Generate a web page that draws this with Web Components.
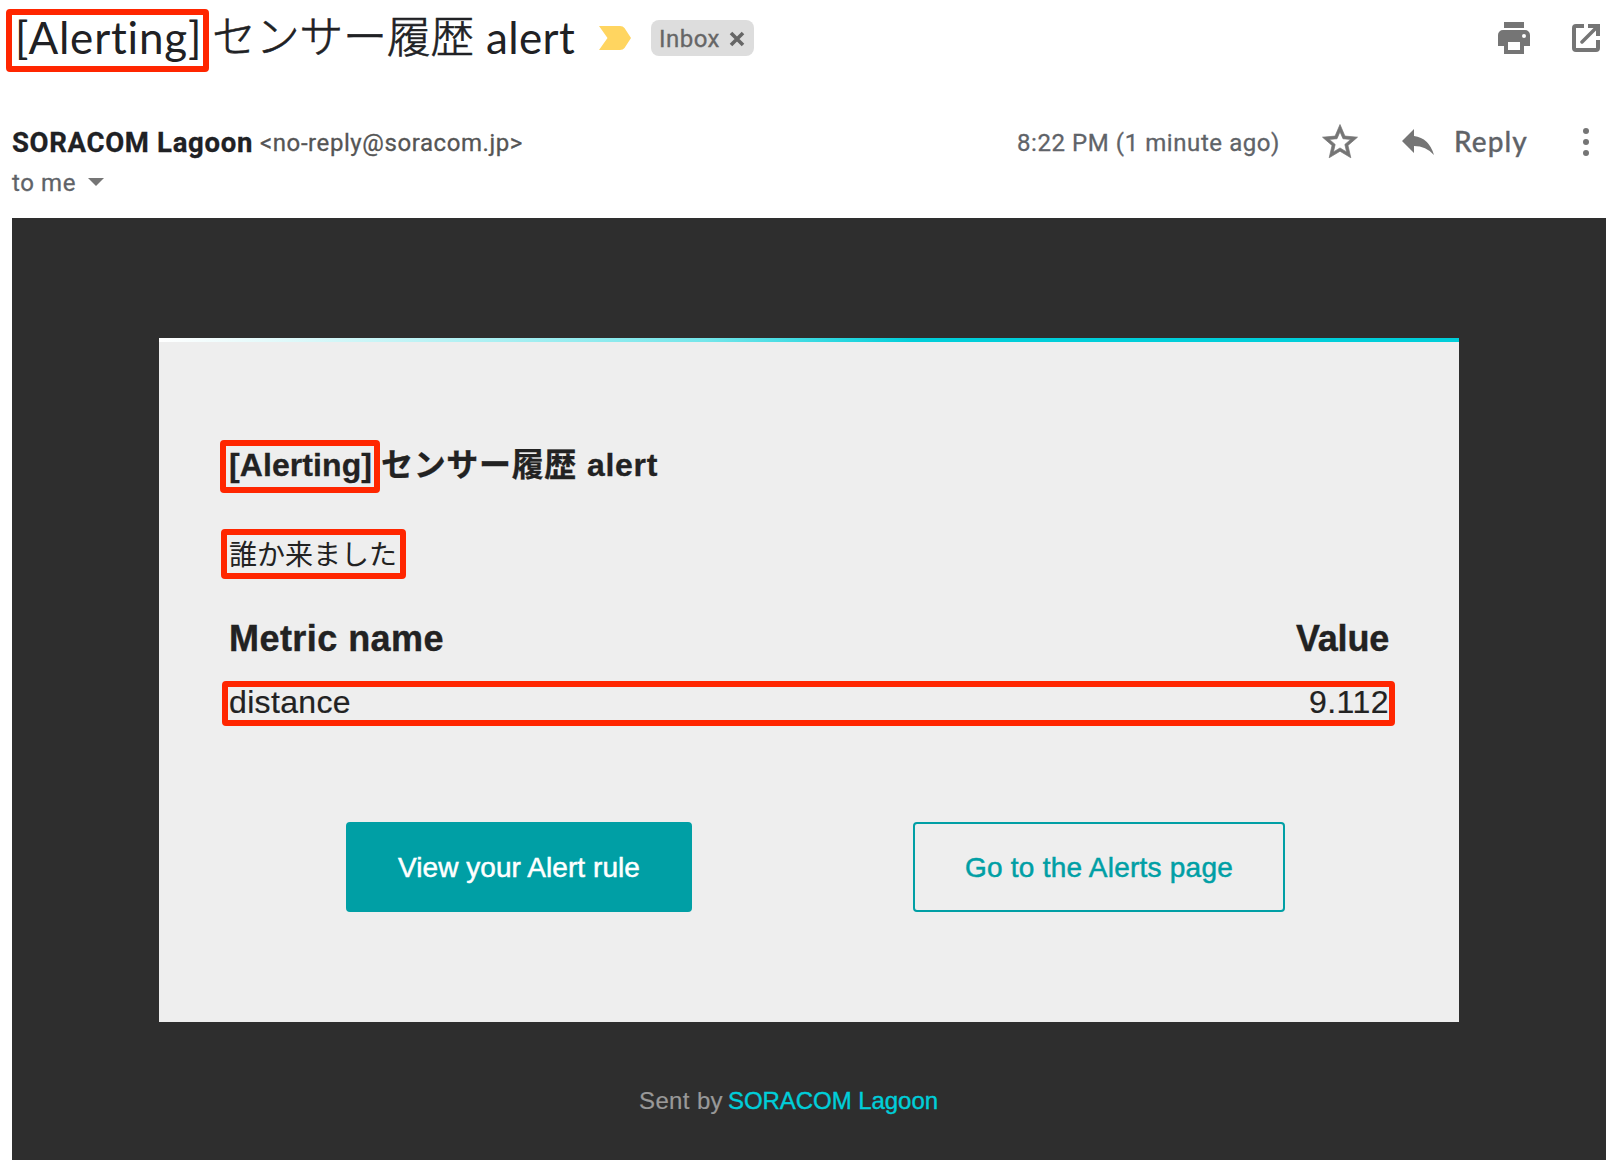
<!DOCTYPE html>
<html lang="ja">
<head>
<meta charset="utf-8">
<title>[Alerting] センサー履歴 alert</title>
<style>
html,body{margin:0;background:#fff}
</style>
</head>
<body>
<mail-view></mail-view>
<script>
const define=(name,html,setup)=>customElements.define(name,class extends HTMLElement{
  constructor(){super();this.attachShadow({mode:'open'}).innerHTML=html;}
  connectedCallback(){if(setup)setup(this);}
});

/* One line of text: w = advance width, letter spacing is derived from it */
define('text-run',`<style>
:host{display:block;white-space:nowrap;flex:none;line-height:1}
span{display:inline-block}
</style><span><slot></slot></span>`,el=>{
  const w=parseFloat(el.getAttribute('w'));
  if(!w)return;
  const s=el.shadowRoot.querySelector('span');
  const n=[...el.textContent].length;
  s.style.letterSpacing=(w-s.getBoundingClientRect().width)/n+'px';
  el.style.width=w+'px';
});

/* Red frame drawn over the content it marks */
define('red-frame',`<style>:host{position:absolute;box-sizing:border-box;border:6px solid #ff2600;border-radius:4px;pointer-events:none}</style>`);

define('mail-label',`<style>
:host{display:flex;align-items:center;box-sizing:border-box;width:103px;height:36px;border-radius:8px;background:#ddd;color:#666;padding-left:8px;font:24px Roboto,sans-serif;-webkit-text-stroke:.3px}
text-run{padding-top:2px}
svg{margin-left:9px;margin-top:1px}
</style><text-run w="61">Inbox</text-run><svg width="16" height="16" viewBox="0 0 16 16"><path d="M2 2 14 14M14 2 2 14" stroke="#666" stroke-width="3.600"/></svg>`);

define('mail-subject',`<style>
:host{display:flex;align-items:center;position:relative;height:76px;padding:0 14px 0 15px;color:#202124;font:44px Lato,"Noto Sans CJK JP",sans-serif}
text-run{padding-bottom:2px}
.jp{font-weight:300;font-family:"Noto Sans CJK JP",sans-serif;margin-left:9px;padding-bottom:8px;-webkit-text-stroke:.6px}
.al{margin-left:12px}
.chev{margin-left:24px}
mail-label{margin-left:20px}
.sp{flex:1}
.open{margin-left:42px}
svg{display:block;flex:none}
red-frame{left:6px;top:9px;width:203px;height:63px}
</style>
<text-run w="188">[Alerting]</text-run><text-run class="jp" w="262">センサー履歴</text-run><text-run class="al" w="89">alert</text-run>
<svg class="chev" width="32" height="24" viewBox="0 0 32 24"><path d="M0 0H21Q24 0 25.5 2L32 12 25.5 22Q24 24 21 24H0L8.5 12Z" fill="#ffd560"/></svg>
<mail-label></mail-label><div class="sp"></div>
<svg width="32" height="32" viewBox="0 0 32 32" fill="#757575"><path d="M6 0H26V6H6Z"/><path fill-rule="evenodd" d="M5 8H27A5 5 0 0 1 32 13V24H26V32H6V24H0V13A5 5 0 0 1 5 8ZM10 20V28H22V20ZM26 12A2 2 0 1 0 26 16 2 2 0 1 0 26 12Z"/></svg>
<svg class="open" width="30" height="28" viewBox="0 0 30 28" fill="none" stroke="#757575" stroke-width="4"><path d="M12 2H4Q2 2 2 4V24Q2 26 4 26H24Q26 26 26 24V16M16 2H26V12"/><path d="M26 2 10 18" stroke-linecap="round" stroke-width="3.500"/></svg>
<red-frame></red-frame>`);

define('mail-meta',`<style>
:host{display:block;height:142px;padding:0 12px;color:#5f6368;font:24px Roboto,sans-serif;-webkit-text-stroke:.3px}
text-run{padding-top:2px}
.r{display:flex;align-items:center;height:40px;padding-top:46px}
.s{font-size:27.5px;font-weight:700;color:#202124}
.e{color:#555;margin-left:7px}
.sp{flex:1}
svg{display:block;flex:none}
.star{margin-left:39px}
.rep{margin-left:41px}
.reply{font:500 28px/1 Lato,sans-serif;margin-left:20px;padding:0 0 2px}
.dots{margin-left:55px;margin-right:15px}
.to{display:flex;align-items:center;height:40px}
.tri{margin-left:12px}
</style>
<div class="r"><text-run class="s" w="241">SORACOM Lagoon</text-run><text-run class="e" w="263">&lt;no-reply@soracom.jp&gt;</text-run><div class="sp"></div>
<text-run w="263">8:22 PM (1 minute ago)</text-run>
<svg class="star" width="42" height="42" viewBox="0 0 24 24" fill="#757575" stroke="#757575" stroke-width=".4"><path d="M22 9.240l-7.190-.62L12 2 9.190 8.630 2 9.240l5.460 4.730L5.820 21 12 17.270 18.180 21l-1.630-7.030L22 9.240zM12 15.400l-3.760 2.270 1-4.280-3.320-2.880 4.380-.38L12 6.100l1.710 4.040 4.380.38-3.320 2.880 1 4.280L12 15.400z"/></svg>
<svg class="rep" width="32" height="26" viewBox="0 0 32 26" fill="#757575"><path d="M0 12 12 0V7Q27 9 32 26 24 17 12 17V24Z"/></svg>
<text-run class="reply" w="74">Reply</text-run>
<svg class="dots" width="6" height="28" viewBox="0 0 6 28" fill="#757575"><circle cx="3" cy="3" r="3"/><circle cx="3" cy="14" r="3"/><circle cx="3" cy="25" r="3"/></svg></div>
<div class="to"><text-run w="64">to me</text-run><svg class="tri" width="16" height="8" viewBox="0 0 16 8"><path d="M0 0H16L8 8Z" fill="#757575"/></svg></div>`);

define('action-button',`<style>
:host{display:flex;align-items:center;justify-content:center;box-sizing:border-box;height:90px;border:2px solid #009fa5;border-radius:4px;font-size:28px;color:#009fa5;padding-top:2px;-webkit-text-stroke:.5px}
:host([primary]){background:#009fa5;color:#fff}
</style><slot></slot>`);

define('alert-card',`<style>
:host{display:block;position:relative;box-sizing:border-box;width:1300px;height:684px;background:linear-gradient(90deg,#fff,#74e6ea 42%,#00ced9 58%) 0 0/100% 4px no-repeat #eee;color:#222;padding:107px 70px 0;font:32px "Liberation Sans","Noto Sans CJK JP",sans-serif}
.h{display:flex;align-items:center;height:40px;font-weight:700;-webkit-text-stroke:.3px}
.h .al{margin-left:10px}
.h .jp{margin-left:9px;padding-bottom:7px}
.jp{font-family:"Noto Sans CJK JP",sans-serif}
.m{display:flex;align-items:center;height:50px;margin-top:43px;font-size:28px}
.t{display:flex;justify-content:space-between;align-items:center}
.th{height:40px;margin-top:41px;font-size:36px;font-weight:700;-webkit-text-stroke:.4px}
.td{height:40px;margin-top:23px;-webkit-text-stroke:.2px}
.b{display:flex;margin:100px 0 0 117px}
.b .v{width:346px;margin-right:221px}
.b .g{width:372px}
.f1{left:61px;top:102px;width:160px;height:53px}
.f2{left:62px;top:191px;width:185px;height:50px}
.f3{left:63px;top:343px;width:1173px;height:45px}
</style>
<div class="h"><text-run w="143">[Alerting]</text-run><text-run class="jp" w="196">センサー履歴</text-run><text-run class="al" w="71">alert</text-run></div>
<div class="m"><text-run class="jp" w="168">誰か来ました</text-run></div>
<div class="t th"><text-run w="215">Metric name</text-run><text-run w="93">Value</text-run></div>
<div class="t td"><text-run w="122">distance</text-run><text-run w="80">9.112</text-run></div>
<div class="b"><action-button primary class="v"><text-run w="242">View your Alert rule</text-run></action-button><action-button class="g"><text-run w="268">Go to the Alerts page</text-run></action-button></div>
<red-frame class="f1"></red-frame><red-frame class="f2"></red-frame><red-frame class="f3"></red-frame>`);

define('mail-body',`<style>
:host{display:flex;flex-direction:column;align-items:flex-start;box-sizing:border-box;width:1594px;height:942px;margin-left:12px;padding:120px 0 0 147px;background:#2e2e2e;font:24px "Liberation Sans",sans-serif}
.f{display:flex;margin:67px 0 0 480px;color:#999;-webkit-text-stroke:.2px}
.l{color:#00ced9;margin-left:5px;-webkit-text-stroke:.4px}
</style><alert-card></alert-card>
<div class="f"><text-run w="84">Sent by</text-run><text-run class="l" w="210">SORACOM Lagoon</text-run></div>`);

define('mail-view',`<style>:host{display:block;width:1616px;height:1170px;overflow:hidden;background:#fff}</style>
<mail-subject></mail-subject><mail-meta></mail-meta><mail-body></mail-body>`);
</script>
</body>
</html>
